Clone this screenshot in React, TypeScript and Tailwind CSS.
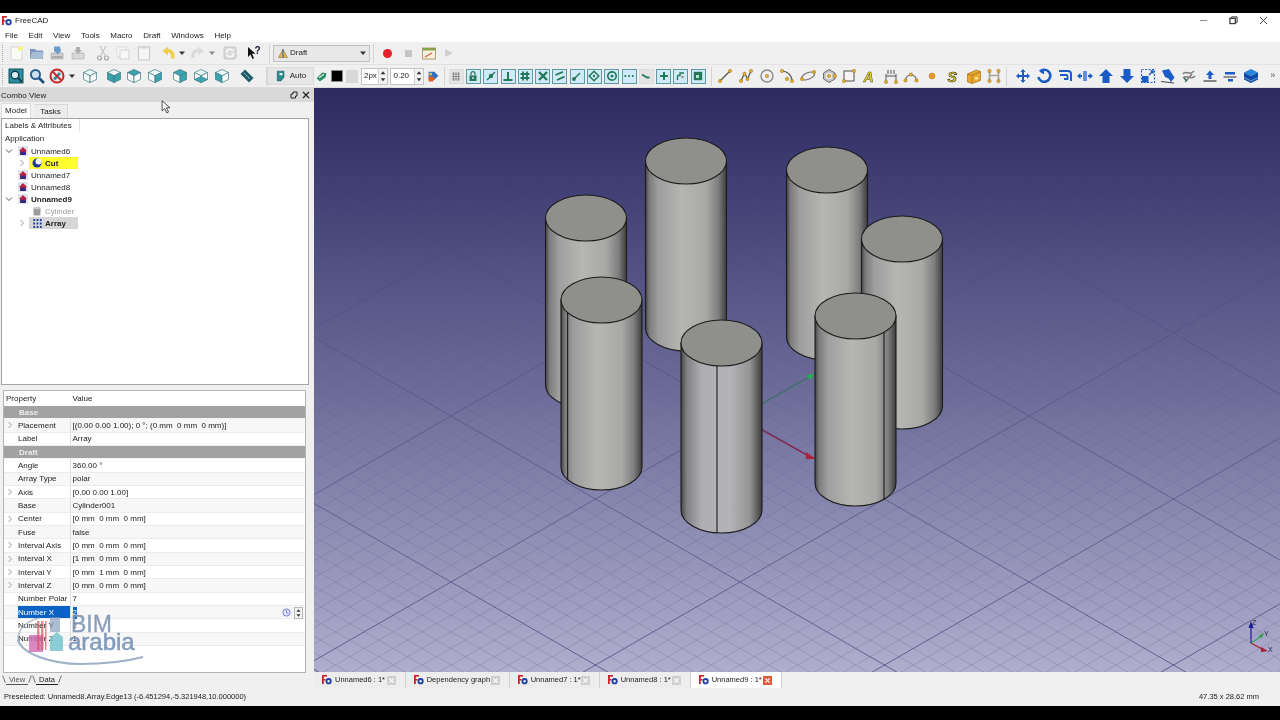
import type { ReactNode } from "react";

const font = "font-['Liberation_Sans',Arial,sans-serif]";

function I({ children, className = "w-4 h-4" }: { children: ReactNode; className?: string }) {
  return (
    <svg viewBox="0 0 16 16" className={className}>
      {children}
    </svg>
  );
}

function Slot({ className = "w-[20.7px]", children }: { className?: string; children?: ReactNode }) {
  return <div className={`flex shrink-0 items-center justify-center ${className}`}>{children}</div>;
}

function Grip() {
  return <div className="h-[17px] w-[2px] shrink-0 border-l border-dotted border-[#a8a8a8]" />;
}

function Sep({ className = "" }: { className?: string }) {
  return <div className={`h-[19px] w-px shrink-0 bg-[#d4d4d4] ${className}`} />;
}

function FcLogo({ className = "w-[10px] h-[10px]" }: { className?: string }) {
  return (
    <svg viewBox="0 0 10 10" className={className}>
      <rect x="0" y="0" width="5" height="1.6" fill="#d0202a" />
      <rect x="0" y="0" width="1.8" height="9" fill="#d0202a" />
      <rect x="0" y="4" width="3.5" height="1.5" fill="#d0202a" />
      <circle cx="6.6" cy="6.2" r="2.2" fill="none" stroke="#1c3fa8" strokeWidth="1.8" />
    </svg>
  );
}

function Dropdown() {
  return (
    <svg viewBox="0 0 8 8" className="h-2 w-2">
      <path d="M1 2.5h6L4 6z" fill="#333" />
    </svg>
  );
}

function Cube({ face }: { face?: "t" | "l" | "r" | "lr" | "b" | "tr" }) {
  const on = "#3ba3ae";
  const soft = "#eef7f8";
  return (
    <I>
      <path d="M8 1.5 14.5 4.5 8 7.8 1.5 4.5z" fill={face === "t" || face === "tr" ? on : soft} stroke="#3b7782" strokeWidth=".7" />
      <path d="M1.5 4.5 8 7.8V14.6L1.5 11.4z" fill={face === "l" || face === "lr" ? on : "#f8fbfb"} stroke="#3b7782" strokeWidth=".7" />
      <path d="M14.5 4.5 8 7.8V14.6l6.5-3.2z" fill={face === "r" || face === "lr" || face === "tr" ? on : "#f8fbfb"} stroke="#3b7782" strokeWidth=".7" />
      {face === "b" && <path d="M1.5 11.4 8 8.4l6.5 3L8 14.6z" fill={on} stroke="#3b7782" strokeWidth=".6" />}
    </I>
  );
}

const g = "#26785a";

const snapIcons: ReactNode[] = [
  <>
    <path d="M2 4h8M2 6.5h8M2 9h8M3.5 2v9M6 2v9M8.5 2v9" stroke="#8a8a8a" strokeWidth=".9" />
  </>,
  <>
    <rect x="2.5" y="5.5" width="7" height="5.5" fill={g} />
    <path d="M4 5.5V3.6a2 2 0 0 1 4 0v1.9" fill="none" stroke={g} strokeWidth="1.2" />
    <rect x="5.3" y="7" width="1.4" height="2" fill="#c9e8f5" />
  </>,
  <>
    <path d="M2 10 10 2" stroke={g} strokeWidth="1.5" />
    <circle cx="6" cy="6" r="2.2" fill={g} />
  </>,
  <path d="M6 2v8M1.5 10h9" stroke={g} strokeWidth="2" />,
  <path d="M4 1.5v9M8 1.5v9M1.5 4h9M1.5 8h9" stroke={g} strokeWidth="1.8" />,
  <path d="M2 2l8 8M10 2l-8 8" stroke={g} strokeWidth="2.4" />,
  <path d="M1.5 5 9 1.8M3 10l7.5-3.4" stroke={g} strokeWidth="1.8" />,
  <>
    <path d="M2 10 9 3" stroke={g} strokeWidth="1.4" />
    <circle cx="3" cy="9" r="1.9" fill={g} />
  </>,
  <>
    <path d="M6 1.2 10.8 6 6 10.8 1.2 6z" fill="none" stroke={g} strokeWidth="1.5" />
    <circle cx="6" cy="6" r="1.2" fill={g} />
  </>,
  <>
    <circle cx="6" cy="6" r="4.2" fill="none" stroke={g} strokeWidth="1.7" />
    <circle cx="6" cy="6" r="1.5" fill={g} />
  </>,
  <path d="M1.5 6h1.6M5.2 6h1.6M8.9 6h1.6" stroke={g} strokeWidth="2" />,
  <path d="M2 4.5 7 7.5M6.5 7.5h3" stroke={g} strokeWidth="2" />,
  <path d="M6 2v8M2 6h8" stroke={g} strokeWidth="2" />,
  <>
    <path d="M2.5 10V5.5M2.5 5.5h2.5V3H9" fill="none" stroke={g} strokeWidth="1.4" />
    <circle cx="7.5" cy="7" r="1.2" fill="#888" />
  </>,
  <>
    <rect x="1.8" y="1.8" width="8.4" height="8.4" fill={g} />
    <rect x="4" y="5" width="3" height="3" fill="#b9e4c8" />
  </>,
];

function Dot({ x, y }: { x: number; y: number }) {
  return <circle cx={x} cy={y} r="1.7" fill="#e2a92c" stroke="#8a6a14" strokeWidth=".4" />;
}

const wireIcons: ReactNode[] = [
  <I key="line">
    <path d="M3 13 13 3" stroke="#505050" strokeWidth="1.3" />
    <Dot x={3} y={13} />
    <Dot x={13} y={3} />
  </I>,
  <I key="wire">
    <path d="M3 13 6.5 5 9.5 11 13 3" stroke="#505050" strokeWidth="1.2" fill="none" />
    <Dot x={3} y={13} />
    <Dot x={6.5} y={6} />
    <Dot x={9.5} y={11} />
    <Dot x={13} y={3} />
  </I>,
  <I key="circle">
    <circle cx="8" cy="8" r="6" fill="#eee" stroke="#8a8a8a" strokeWidth="1.4" />
    <Dot x={8} y={8} />
  </I>,
  <I key="arc">
    <path d="M3 3c5 0 10 4 10 10" stroke="#606060" strokeWidth="1.2" fill="none" />
    <Dot x={3} y={3} />
    <Dot x={8} y={11} />
    <Dot x={13} y={13} />
  </I>,
  <I key="ellipse">
    <ellipse cx="8" cy="8" rx="7" ry="3.2" transform="rotate(-22 8 8)" fill="none" stroke="#707070" strokeWidth="1.1" />
    <Dot x={14} y={4} />
    <Dot x={2} y={11} />
  </I>,
  <I key="polygon">
    <path d="M8 1.5 14 5v6L8 14.5 2.5 11V5z" fill="#c4c4c4" stroke="#6f6f6f" />
    <circle cx="8" cy="8" r="3.2" fill="#f0f0f0" />
    <Dot x={8} y={8} />
    <Dot x={14} y={8} />
  </I>,
  <I key="rect">
    <rect x="3" y="3" width="10" height="10" fill="#f4f4f4" stroke="#505050" strokeWidth="1" />
    <Dot x={3} y={13} />
    <Dot x={13} y={3} />
  </I>,
  <I key="text">
    <text x="1.5" y="13.5" fontSize="14" fontWeight="700" fontStyle="italic" fontFamily="'Liberation Sans',sans-serif" fill="#e7d22c" stroke="#4d4a20" strokeWidth=".5">
      A
    </text>
  </I>,
  <I key="dim">
    <path d="M3 14V6M13 14V6M3 8h10" stroke="#555" strokeWidth="1" />
    <path d="M5 2v4M8 2v4M11 2v4" stroke="#6a6a6a" strokeWidth="1.2" />
    <Dot x={3} y={14} />
    <Dot x={13} y={14} />
  </I>,
  <I key="bspline">
    <path d="M2.5 13C3 5 13 5 13.5 13" stroke="#555" strokeWidth="1.2" fill="none" />
    <Dot x={2.5} y={12.5} />
    <Dot x={8} y={6.5} />
    <Dot x={13.5} y={12.5} />
  </I>,
  <I key="point">
    <circle cx="8" cy="8" r="3" fill="#e49a2a" stroke="#b9761a" strokeWidth=".5" />
  </I>,
  <I key="shape">
    <text x="2.5" y="13.5" fontSize="14" fontWeight="700" fontStyle="italic" fontFamily="'Liberation Sans',sans-serif" fill="#e9d52a" stroke="#2b2b16" strokeWidth=".6">
      S
    </text>
  </I>,
  <I key="face">
    <path d="M1.5 6 10 2l4.5 1.5v9L6 15.5 1.5 14z" fill="#eaa82c" stroke="#95641a" strokeWidth=".6" />
    <path d="M6 7.5 14.5 3.5M6 7.5V15.5M1.5 6 6 7.5" stroke="#9b6a1d" strokeWidth=".7" fill="none" />
    <path d="M9 9h3v2.5H9z" fill="#f8e3a0" />
  </I>,
  <I key="bubble">
    <path d="M3.5 3v10M12.5 3v10M3.5 7.5h9" stroke="#a7a296" strokeWidth="1.6" />
    <Dot x={3.5} y={3} />
    <Dot x={12.5} y={3} />
    <Dot x={3.5} y={13} />
    <Dot x={12.5} y={13} />
  </I>,
];

const b = "#1b5cc6";

const modIcons: ReactNode[] = [
  <I key="move">
    <path d="M8 1 10.6 4H9v3h3V5.3L15 8l-3 2.7V9H9v3h1.6L8 15l-2.6-3H7V9H4v1.7L1 8l3-2.7V7h3V4H5.4z" fill={b} />
  </I>,
  <I key="rotate">
    <path d="M4 3.5A6 6 0 1 1 2.4 9" fill="none" stroke={b} strokeWidth="2.6" />
    <path d="M8 .5v6L3.5 3.5z" fill={b} />
  </I>,
  <I key="offset">
    <path d="M2 3h9a3 3 0 0 1 3 3v7" fill="none" stroke={b} strokeWidth="2" />
    <path d="M3 7h6.5a1 1 0 0 1 1 1v3H7" fill="none" stroke={b} strokeWidth="1.8" />
  </I>,
  <I key="trim">
    <path d="M0 8l3.5-3v2h1.5v2H3.5v2zM16 8l-3.5-3v2H11v2h1.5v2z" fill={b} />
    <path d="M7 3v10M9 3v10" stroke={b} strokeWidth="1.3" />
  </I>,
  <I key="up">
    <path d="M8 1 15 8h-3.5v7h-7V8H1z" fill={b} />
  </I>,
  <I key="down">
    <path d="M8 15 1 8h3.5V1h7v7H15z" fill={b} />
  </I>,
  <I key="scale">
    <rect x="1.5" y="1.5" width="13" height="13" fill="none" stroke={b} strokeWidth="1.2" strokeDasharray="2 1.5" />
    <rect x="2" y="8" width="6.5" height="6.5" fill={b} />
    <path d="M9 7l4-4M10.5 3H13v2.5" stroke={b} strokeWidth="1.4" fill="none" />
  </I>,
  <I key="sketch">
    <path d="M2 2.5 9 1l5.500 8.500L11 14 8.500 10.500 5 9z" fill={b} />
    <path d="M1 13.5 14 15" stroke="#444" strokeWidth="1.2" />
  </I>,
  <I key="shapestr">
    <path d="M2 6c3-5 6 3 11-3M2 10c4-4 8 3 12-2M4 14l7-8" fill="none" stroke="#7d7d7d" strokeWidth="1.5" />
    <path d="M3 10l3 3" stroke="#1f6f4a" strokeWidth="1.4" />
  </I>,
  <I key="upgrade">
    <path d="M8 2.5 12 7H9.5v4h-3V7H4z" fill={b} />
    <path d="M1.5 13h13" stroke="#555" strokeWidth="1.4" />
  </I>,
  <I key="downgrade">
    <rect x="3" y="4" width="10" height="2.5" fill={b} />
    <path d="M1.500 9h13" stroke="#666" strokeWidth="1.4" />
    <rect x="6" y="11" width="5" height="2.5" fill={b} />
  </I>,
  <I key="wireclone">
    <path d="M8 1 15 4.5 8 8 1 4.5z" fill="#2a86dc" />
    <path d="M1 4.5 8 8v7l-7-3.500zM15 4.5 8 8v7l7-3.500z" fill="#0d4ba8" />
    <path d="M1 9.5 8 13l7-3.5" stroke="#9bb0c8" strokeWidth=".8" fill="none" />
  </I>,
];

function Toggle({ i }: { i: number }) {
  const off = i === 0 || i === 11;
  return (
    <Slot className="w-[17.3px]">
      <div className={`flex h-[15px] w-[15px] items-center justify-center border ${off ? "border-[#dcdcdc] bg-[#e4e4e4]" : "border-[#5d9aa6] bg-[#d0ebf7]"}`}>
        <svg viewBox="0 0 12 12" className="h-[12px] w-[12px]">
          {snapIcons[i]}
        </svg>
      </div>
    </Slot>
  );
}

function Spin({ value, className }: { value: string; className: string }) {
  return (
    <div className={`flex h-[17px] shrink-0 items-center border border-[#c4c4c4] bg-white text-[8px] text-[#222] ${className}`}>
      <span className="flex-1 pl-[2px]">{value}</span>
      <span className="flex h-full w-[9px] flex-col border-l border-[#d5d5d5] bg-[#f2f2f2]">
        <svg viewBox="0 0 8 8" className="h-1/2 w-full">
          <path d="M1.5 5.5 4 2.5l2.5 3z" fill="#333" />
        </svg>
        <svg viewBox="0 0 8 8" className="h-1/2 w-full">
          <path d="M1.5 2.5h5L4 5.5z" fill="#333" />
        </svg>
      </span>
    </div>
  );
}

function ToolbarOne() {
  return (
    <div className="flex h-[23px] items-center border-b border-[#e2e2e2] bg-[#f0f0f0]">
      <div className="flex w-[5.6px] justify-center"><Grip /></div>
      <Slot>
        <I>
          <path d="M3 2h8l3 3v10H3z" fill="#fbfbf6" stroke="#cfcfcf" strokeWidth=".8" />
          <circle cx="12.5" cy="3.5" r="2.6" fill="#f8f28a" />
        </I>
      </Slot>
      <Slot>
        <I>
          <path d="M1 4h5l1.5 1.5H14V14H1z" fill="#7d98b8" />
          <path d="M3 7h12l-2 7H1z" fill="#a7bdd4" />
        </I>
      </Slot>
      <Slot>
        <I>
          <path d="M2 8h12v6H2z" fill="#cfcfcf" stroke="#a0a0a0" strokeWidth=".6" />
          <path d="M5 1.5h6l1 4.500-3 3.500L5 6z" fill="#6a9cc8" />
          <path d="M3 12h10" stroke="#888" />
        </I>
      </Slot>
      <Slot>
        <I>
          <path d="M2 8h12v6H2z" fill="#d8d8d8" stroke="#aaa" strokeWidth=".6" />
          <path d="M6 2h4v3h2L8 9 4 5h2z" fill="#aeaeae" />
        </I>
      </Slot>
      <Slot className="ml-[4px] w-[20.7px]">
        <I>
          <path d="M11 1 5.5 11M5 1l5.5 10" stroke="#cacaca" strokeWidth="1.3" />
          <circle cx="4.5" cy="13" r="2" fill="none" stroke="#a8a8a8" strokeWidth="1.2" />
          <circle cx="11.5" cy="13" r="2" fill="none" stroke="#a8a8a8" strokeWidth="1.2" />
        </I>
      </Slot>
      <Slot>
        <I>
          <rect x="2" y="2" width="9" height="10" fill="#f7f7f7" stroke="#dcdcdc" />
          <rect x="5" y="5" width="9" height="9" fill="#f7f7f7" stroke="#d2d2d2" />
        </I>
      </Slot>
      <Slot>
        <I>
          <rect x="2.5" y="2" width="11" height="13" fill="#f5f5f5" stroke="#c8c8c8" />
          <rect x="5.5" y="1" width="5" height="2.5" fill="#d2d2d2" />
        </I>
      </Slot>
      <Slot className="ml-[5.6px] w-4">
        <I>
          <path d="M12.5 13.5c1.5-6-3-9-6.500-7.500" fill="none" stroke="#f2cc4a" strokeWidth="3.4" />
          <path d="M8 1.5v9L2.500 6z" fill="#f2cc4a" />
        </I>
      </Slot>
      <Slot className="ml-[1px] w-[10px]"><Dropdown /></Slot>
      <Slot className="ml-[3px] w-4">
        <I>
          <path d="M3 13C2 7 6 4 10 6" fill="none" stroke="#dadada" strokeWidth="3.2" />
          <path d="M8 1.5v9L14 6z" fill="#dcdcdc" />
        </I>
      </Slot>
      <Slot className="ml-[1px] w-[10px]">
        <svg viewBox="0 0 8 8" className="h-2 w-2"><path d="M1 2.5h6L4 6z" fill="#888" /></svg>
      </Slot>
      <Slot className="ml-[3px] w-5">
        <I>
          <rect x="2" y="2" width="12" height="12" rx="2" fill="#dcdcdc" stroke="#c4c4c4" />
          <path d="M4.5 8a3.500 3.500 0 0 1 6.500-2M11.5 8A3.500 3.500 0 0 1 5 10" stroke="#f8f8f8" strokeWidth="1.5" fill="none" />
        </I>
      </Slot>
      <Slot className="ml-[4px] w-5">
        <I>
          <path d="M2 2v10l2.500-2.500L6.500 14l1.600-.8L6 8.800h3.400z" fill="#111" />
          <text x="8.5" y="9" fontSize="10" fontWeight="700" fill="#111a30" fontFamily="'Liberation Sans',sans-serif">?</text>
        </I>
      </Slot>
      <Sep className="ml-[5px]" />
      <div className="ml-[3px] flex h-[17px] w-[97px] shrink-0 items-center border border-[#c2c2c2] bg-[#e8e8e8] pl-[3px] text-[8px] text-[#222]">
        <I className="h-3 w-3">
          <path d="M2 14 8 3l6 11z" fill="#e0b84a" stroke="#8a6a20" strokeWidth=".7" />
          <path d="M8 3v11" stroke="#2b5fb0" strokeWidth="1.4" />
        </I>
        <span className="ml-[1px] flex-1">Draft</span>
        <span className="mr-[2px]"><Dropdown /></span>
      </div>
      <Sep className="ml-[3px]" />
      <Slot className="ml-[3px] w-5">
        <div className="h-[9px] w-[9px] rounded-full bg-[#e4212c]" />
      </Slot>
      <Slot className="ml-[1px] w-5">
        <div className="h-[7px] w-[7px] bg-[#c4c4c4]" />
      </Slot>
      <Slot className="ml-[1px] w-5">
        <I>
          <rect x="1.5" y="3" width="13" height="11" fill="#f6f0dc" stroke="#b0a070" />
          <rect x="1.5" y="3" width="13" height="2.5" fill="#8aa14c" />
          <path d="M4 12 11 8" stroke="#d0694a" strokeWidth="1.4" />
        </I>
      </Slot>
      <Slot className="w-5">
        <svg viewBox="0 0 10 10" className="h-[10px] w-[10px]"><path d="M1 1 9 5 1 9z" fill="#cfcfcf" /></svg>
      </Slot>
    </div>
  );
}

function ToolbarTwo() {
  return (
    <div className="flex h-[23px] items-center border-b border-[#dcdcdc] bg-[#f0f0f0]">
      <div className="flex w-[5.6px] justify-center"><Grip /></div>
      <Slot>
        <I>
          <rect x="1" y="1" width="14" height="14" fill="#2a8fa0" stroke="#14535f" />
          <circle cx="7" cy="7" r="3.8" fill="#d9edf2" stroke="#10414c" strokeWidth="1.4" />
          <path d="M10 10l4 4" stroke="#10414c" strokeWidth="2" />
        </I>
      </Slot>
      <Slot>
        <I>
          <circle cx="6.5" cy="6.5" r="4.5" fill="#cfe0ee" stroke="#2a5f92" strokeWidth="2" />
          <path d="M10 10l5 5" stroke="#1f4f7c" strokeWidth="2.6" />
        </I>
      </Slot>
      <Slot>
        <I>
          <circle cx="8" cy="8" r="6.500" fill="#e9e9e9" stroke="#c62a28" strokeWidth="2" />
          <path d="M4 10.500 10 4l2 2-6 6.500z" fill="#2a8fa0" />
          <path d="M3.5 3.5l9 9" stroke="#c62a28" strokeWidth="1.8" />
        </I>
      </Slot>
      <Slot className="w-2"><Dropdown /></Slot>
      <Slot className="ml-[4px] w-5"><Cube /></Slot>
      <Slot className="ml-[3.6px] w-[20.7px]"><Cube face="lr" /></Slot>
      <Slot><Cube face="t" /></Slot>
      <Slot><Cube face="r" /></Slot>
      <Slot className="ml-[4.6px] w-[20.7px]"><Cube face="tr" /></Slot>
      <Slot><Cube face="b" /></Slot>
      <Slot><Cube face="l" /></Slot>
      <Slot className="ml-[5px] w-5">
        <I>
          <path d="M1.5 6 6 1.5 14.5 10 10 14.500z" fill="#1f5c68" />
          <path d="M5 5l1.500 1.500M7 7l1.500 1.500M9 9l1.500 1.500" stroke="#bfe2e6" strokeWidth=".9" />
        </I>
      </Slot>
      <Sep className="ml-[9px]" />
      <div className="flex h-[18px] w-[47px] shrink-0 items-center justify-center gap-[3px] border border-[#dadada] bg-[#e6e6e6] text-[8px] text-[#222]">
        <I className="h-3 w-3">
          <path d="M3 1.500h9v8l-4 5H3z" fill="#2a8a90" stroke="#13515a" strokeWidth=".7" />
          <path d="M6 4h4v3H6z" fill="#e2f0f0" />
        </I>
        Auto
      </div>
      <Slot className="w-4">
        <I className="h-[13px] w-[13px]">
          <path d="M2 10 9 3l5 1-1 5-7 5z" fill="#2c8d62" />
          <path d="M5 9.500 11 5" stroke="#f2f2f2" strokeWidth="1.3" />
        </I>
      </Slot>
      <div className="ml-[1px] h-[12px] w-[12px] shrink-0 border border-[#8a8a8a] bg-black" />
      <div className="ml-[3px] h-[13px] w-[12px] shrink-0 bg-[#d8d8d8]" />
      <Spin value="2px" className="ml-[3px] w-[27px]" />
      <Spin value="0.20" className="ml-[2.5px] w-[34px]" />
      <Slot className="ml-[1px] w-[16px]">
        <I className="h-[13px] w-[13px]">
          <path d="M2 2h7l5 5-5 5H2z" fill="#2f6fc0" />
          <path d="M2 8h5l3 3-3 3H2z" fill="#d8632a" />
          <rect x="3" y="3.500" width="3" height="3" fill="#f0c83c" />
        </I>
      </Slot>
      <Sep className="ml-[3px]" />
      <div className="ml-[2px] flex">
        {snapIcons.map((_, i) => (
          <Toggle key={i} i={i} />
        ))}
      </div>
      <Sep className="ml-[4px]" />
      <div className="ml-[3px] flex">
        {wireIcons.map((ic, i) => (
          <Slot key={i}>{ic}</Slot>
        ))}
      </div>
      <Sep className="ml-[1px]" />
      <div className="ml-[6.5px] flex">
        {modIcons.map((ic, i) => (
          <Slot key={i}>{ic}</Slot>
        ))}
      </div>
      <span className="ml-[9px] text-[9px] text-[#555]">»</span>
    </div>
  );
}

function DocIcon() {
  return (
    <svg viewBox="0 0 10 10" className="h-[10px] w-[10px]">
      <rect x="0" y="0" width="10" height="10" fill="#dfe3ee" />
      <path d="M5 1 9 5H8v4H2V5H1z" fill="#c0203c" />
      <rect x="2.5" y="5.5" width="5" height="3.5" fill="#25308e" />
    </svg>
  );
}

function Chevron({ open }: { open?: boolean }) {
  return (
    <svg viewBox="0 0 8 8" className="h-2 w-2">
      <path d={open ? "M1 2.5 4 5.5 7 2.5" : "M2.5 1 5.5 4 2.5 7"} fill="none" stroke={open ? "#555" : "#9a9a9a"} strokeWidth="1" />
    </svg>
  );
}

function TreeDoc({ label, open, bold }: { label: string; open?: boolean; bold?: boolean }) {
  return (
    <div className="flex h-3 items-center">
      <span className="flex w-[13px] justify-center">{open && <Chevron open />}</span>
      <span className="flex w-[16px] justify-center"><DocIcon /></span>
      <span className={`pt-[1px] ${bold ? "font-bold" : ""}`}>{label}</span>
    </div>
  );
}

function TreeObj({ label, icon, bg, arrow, muted }: { label: string; icon: ReactNode; bg?: string; arrow?: boolean; muted?: boolean }) {
  return (
    <div className="flex h-3 items-center pl-[13px]">
      <span className="flex w-[14px] justify-center">{arrow && <Chevron />}</span>
      <span className={`flex h-3 w-[49px] items-center ${bg ?? ""}`}>
        <span className="flex w-[16px] justify-center">{icon}</span>
        <span className={`pt-[1px] ${muted ? "text-[#9a9a9a]" : "font-bold"}`}>{label}</span>
      </span>
    </div>
  );
}

function TreePanel() {
  return (
    <div className="ml-[1px] h-[267px] w-[308px] shrink-0 border border-[#a4a4a4] bg-white text-[8px] text-[#222]">
      <div className="flex h-[13px] w-[78px] items-center border-r border-[#e2e2e2] pl-[3px] pt-[1px]">Labels &amp; Attributes</div>
      <div className="flex h-[13px] items-center pl-[3px] pt-[1px]">Application</div>
      <TreeDoc label="Unnamed6" open />
      <TreeObj
        label="Cut"
        arrow
        bg="bg-[#ffff30]"
        icon={
          <svg viewBox="0 0 10 10" className="h-[10px] w-[10px]">
            <circle cx="5" cy="5" r="4.5" fill="#1c3a9a" />
            <circle cx="6.5" cy="3.5" r="3" fill="#f4f4f4" />
          </svg>
        }
      />
      <TreeDoc label="Unnamed7" />
      <TreeDoc label="Unnamed8" />
      <TreeDoc label="Unnamed9" open bold />
      <TreeObj
        label="Cylinder"
        muted
        icon={
          <svg viewBox="0 0 10 10" className="h-[10px] w-[10px]">
            <rect x="1.5" y="1" width="7" height="8.5" rx="1.5" fill="#9b9b9b" />
            <ellipse cx="5" cy="2" rx="3.5" ry="1.3" fill="#c9c9c9" />
          </svg>
        }
      />
      <TreeObj
        label="Array"
        arrow
        bg="bg-[#d6d6d6]"
        icon={
          <svg viewBox="0 0 9 9" className="h-[9px] w-[9px]">
            <path d="M1.2 0v2M1.2 3.5v2M1.2 7v2M4.5 0v2M4.5 3.5v2M4.5 7v2M7.8 0v2M7.8 3.5v2M7.8 7v2" stroke="#1c3f9a" strokeWidth="1.8" />
          </svg>
        }
      />
    </div>
  );
}

type PropRow = { name: string; value?: string; arrow?: boolean; section?: boolean; selected?: boolean };

const rows: PropRow[] = [
  { name: "Base", section: true },
  { name: "Placement", value: "[(0.00 0.00 1.00); 0 °; (0 mm  0 mm  0 mm)]", arrow: true },
  { name: "Label", value: "Array" },
  { name: "Draft", section: true },
  { name: "Angle", value: "360.00 °" },
  { name: "Array Type", value: "polar" },
  { name: "Axis", value: "[0.00 0.00 1.00]", arrow: true },
  { name: "Base", value: "Cylinder001" },
  { name: "Center", value: "[0 mm  0 mm  0 mm]", arrow: true },
  { name: "Fuse", value: "false" },
  { name: "Interval Axis", value: "[0 mm  0 mm  0 mm]", arrow: true },
  { name: "Interval X", value: "[1 mm  0 mm  0 mm]", arrow: true },
  { name: "Interval Y", value: "[0 mm  1 mm  0 mm]", arrow: true },
  { name: "Interval Z", value: "[0 mm  0 mm  0 mm]", arrow: true },
  { name: "Number Polar", value: "7" },
  { name: "Number X", value: "2", selected: true },
  { name: "Number Y", value: "2" },
  { name: "Number Z", value: "1" },
];

function PropertyRow({ row, alt }: { row: PropRow; alt: boolean }) {
  if (row.section) {
    return (
      <div className="flex h-[13.33px] items-center border-b border-[#f4f4f4] bg-[#a2a2a2] pl-[15px] pt-[1px] font-bold text-[#ececec]">
        {row.name}
      </div>
    );
  }
  return (
    <div className={`flex h-[13.33px] items-center border-b border-[#ececec] ${alt ? "bg-[#f7f7f7]" : "bg-white"}`}>
      <div className="flex w-[14px] shrink-0 pl-[2px]">{row.arrow && <Chevron />}</div>
      <div className={`flex h-full w-[52.5px] shrink-0 items-center whitespace-nowrap border-r border-[#dedede] pt-[1px] ${row.selected ? "bg-[#0a62c4] text-white" : ""}`}>
        {row.name}
      </div>
      <div className="flex flex-1 items-center pl-[2px] pt-[1px]">
        {row.selected ? (
          <>
            <span className="bg-[#0a62c4] text-white">{row.value}</span>
            <span className="flex-1" />
            <svg viewBox="0 0 10 10" className="h-[9px] w-[9px]">
              <circle cx="5" cy="5" r="4" fill="#e3e5f8" stroke="#6a72d4" />
              <path d="M5 2.5V5l2 1" stroke="#4b55c4" fill="none" strokeWidth=".8" />
            </svg>
            <span className="ml-[3px] mr-[2px] flex h-[12px] w-[9px] flex-col border border-[#b9b9b9] bg-[#f1f1f1]">
              <svg viewBox="0 0 8 6" className="h-1/2 w-full"><path d="M1.5 4.5 4 1.5l2.5 3z" fill="#333" /></svg>
              <svg viewBox="0 0 8 6" className="h-1/2 w-full"><path d="M1.5 1.5h5L4 4.5z" fill="#333" /></svg>
            </span>
          </>
        ) : (
          <span className="whitespace-pre">{row.value}</span>
        )}
      </div>
    </div>
  );
}

function Watermark() {
  return (
    <svg viewBox="15 612 135 56" className="pointer-events-none absolute left-[11px] top-[221px] h-[56px] w-[135px]">
      <path d="M18 640c0-12 10-20 22-22" fill="none" stroke="#8ea3bd" strokeWidth="1.5" opacity=".7" />
      <path d="M18 640c4 14 34 24 62 24 26 0 44-2 63-7" fill="none" stroke="#8ea3bd" strokeWidth="2.2" opacity=".85" />
      <rect x="29" y="635" width="14" height="17" fill="#d26bb6" opacity=".8" />
      <path d="M37 621h2.5v29H37zM41 621h2.5v29H41zM45 621h1.5v29H45z" fill="#d9505c" opacity=".65" />
      <rect x="50" y="617" width="10" height="15" fill="#7f9ab8" opacity=".65" />
      <path d="M50 638l7-6 6 5v14H50z" fill="#79c6cf" opacity=".85" />
      <text x="71" y="632" fontSize="23" fontFamily="'Liberation Sans',sans-serif" fill="#7e94b4" stroke="#7e94b4" strokeWidth=".3" opacity=".9">BIM</text>
      <text x="68" y="650" fontSize="24" fontFamily="'Liberation Sans',sans-serif" fill="#7b96bb" stroke="#7b96bb" strokeWidth=".5" opacity=".95">arabia</text>
    </svg>
  );
}

function PropertyPanel() {
  return (
    <div className="relative ml-[3px] h-[283px] w-[303px] shrink-0 border border-[#b4b4b4] bg-white text-[8px] text-[#222]">
      <div className="flex h-[15px] items-center bg-white">
        <div className="flex h-full w-[66.5px] items-center pl-[2px]">Property</div>
        <div className="pl-[2px]">Value</div>
      </div>
      {rows.map((r, i) => (
        <PropertyRow key={i} row={r} alt={i % 2 === 1} />
      ))}
      <Watermark />
    </div>
  );
}

function ComboPanel() {
  return (
    <div className="flex w-[314px] shrink-0 flex-col bg-[#f0f0f0] text-[8px] text-[#222]">
      <div className="flex h-[14px] shrink-0 items-center justify-between bg-[#d9d9d9] pl-[1px] pr-[4px]">
        <span className="pt-[1px]">Combo View</span>
        <span className="flex items-center gap-[4px]">
          <svg viewBox="0 0 8 8" className="h-2 w-2">
            <path d="M3 1h4v4H5.5V7H1V3h2z" fill="none" stroke="#222" strokeWidth="1" />
          </svg>
          <svg viewBox="0 0 8 8" className="h-2 w-2">
            <path d="M1 1l6 6M7 1 1 7" stroke="#222" strokeWidth="1.2" />
          </svg>
        </span>
      </div>
      <div className="flex h-[16px] shrink-0 items-end pl-[1px]">
        <div className="flex h-[15px] w-[30px] items-center justify-center border border-b-0 border-[#dcdcdc] bg-white pb-[1px]">Model</div>
        <div className="ml-[3px] flex h-[14px] w-[34px] items-center justify-center border-r border-t border-[#d8d8d8] bg-[#ececec]">Tasks</div>
      </div>
      <TreePanel />
      <div className="h-[5px] shrink-0" />
      <PropertyPanel />
      <div className="flex h-[14px] shrink-0 items-start pl-[2px] pt-[1px] text-[7.5px]">
        <svg viewBox="0 0 6 12" className="h-[11px] w-[4px]"><path d="M1 0 5 11" stroke="#333" fill="none" /></svg>
        <span className="flex h-[11px] w-[22px] items-center justify-center border-b border-[#555] pt-[1px] text-[#555]">View</span>
        <svg viewBox="0 0 6 12" className="h-[11px] w-[4px]"><path d="M5 0 1 11" stroke="#333" fill="none" /></svg>
        <svg viewBox="0 0 6 12" className="h-[11px] w-[4px]"><path d="M1 0 5 11" stroke="#333" fill="none" /></svg>
        <span className="flex h-[11px] w-[22px] items-center justify-center border-b border-[#222] pt-[1px] text-[#222]">Data</span>
        <svg viewBox="0 0 6 12" className="h-[11px] w-[4px]"><path d="M5 0 1 11" stroke="#333" fill="none" /></svg>
      </div>
    </div>
  );
}

function Cylinder({ cx, cy, edge, gradient = "url(#cyl)" }: { cx: number; cy: number; edge?: number; gradient?: string }) {
  const rx = 40.5;
  const ry = 23;
  const h = 167;
  const edgeTop = edge === undefined ? 0 : cy + ry * Math.sqrt(1 - ((edge - cx) / rx) ** 2);
  return (
    <g stroke="#1b1b1b" strokeWidth="1.1">
      <path
        d={`M${cx - rx} ${cy}V${cy + h}A${rx} ${ry} 0 0 0 ${cx + rx} ${cy + h}V${cy}Z`}
        fill={gradient}
      />
      <ellipse cx={cx} cy={cy} rx={rx} ry={ry} fill="#8f8f8c" />
      {edge !== undefined && <path d={`M${edge} ${edgeTop}V${edgeTop + h}`} fill="none" strokeWidth="1" stroke="#0c0c0c" />}
    </g>
  );
}

function GridLines() {
  // lattice comes from the crossings of the heavy lines: origin 740,416 and one cell 144.5,83
  const ox = 740;
  const oy = 416;
  const ux = 144.5;
  const uy = 83;
  const lines: ReactNode[] = [];
  for (let i = -90; i <= 90; i++) {
    const major = i % 10 === 0;
    const stroke = major ? "#37336f" : "#4d4983";
    const width = major ? 0.9 : 0.55;
    const opacity = major ? 0.72 : 0.4;
    const d = (i / 10) * ux;
    const e = (i / 10) * uy;
    lines.push(
      <line key={`a${i}`} x1={ox + d - ux * 9} y1={oy + e + uy * 9} x2={ox + d + ux * 9} y2={oy + e - uy * 9} stroke={stroke} strokeWidth={width} opacity={opacity} />,
      <line key={`b${i}`} x1={ox + d - ux * 9} y1={oy - e - uy * 9} x2={ox + d + ux * 9} y2={oy - e + uy * 9} stroke={stroke} strokeWidth={width} opacity={opacity} />,
    );
  }
  return <g mask="url(#gridFade)">{lines}</g>;
}

function Scene() {
  return (
    <svg viewBox="314 88 966 584" className="block h-full w-full">
      <defs>
        <linearGradient id="cyl" x1="0" x2="1" y1="0" y2="0">
          <stop offset="0" stopColor="#454545" />
          <stop offset=".05" stopColor="#7c7c7c" />
          <stop offset=".16" stopColor="#9e9e9e" />
          <stop offset=".45" stopColor="#b6b6b4" />
          <stop offset=".75" stopColor="#a8a8a6" />
          <stop offset=".9" stopColor="#7e7e7e" />
          <stop offset="1" stopColor="#3c3c3c" />
        </linearGradient>
        <linearGradient id="cylFront" x1="0" x2="1" y1="0" y2="0">
          <stop offset="0" stopColor="#454545" />
          <stop offset=".07" stopColor="#808082" />
          <stop offset=".25" stopColor="#aeaeb2" />
          <stop offset=".6" stopColor="#b4b4b8" />
          <stop offset=".85" stopColor="#949494" />
          <stop offset="1" stopColor="#3c3c3c" />
        </linearGradient>
        <linearGradient id="fade" x1="0" x2="0" y1="0" y2="1">
          <stop offset="0.15" stopColor="#000" />
          <stop offset="0.6" stopColor="#999" />
          <stop offset="1" stopColor="#fff" />
        </linearGradient>
        <mask id="gridFade" maskUnits="userSpaceOnUse" x="314" y="88" width="966" height="584">
          <rect x="314" y="88" width="966" height="584" fill="url(#fade)" />
        </mask>
      </defs>
      <GridLines />
      <Cylinder cx={586} cy={218} />
      <Cylinder cx={686} cy={161} />
      <Cylinder cx={827} cy={170} />
      <Cylinder cx={902} cy={239} />
      <path d="M762 404 812 376" stroke="#2f7f5c" strokeWidth="1" />
      <path d="M806 376l8-3-3 7z" fill="#22b04a" />
      <path d="M762 430 812 458" stroke="#8e1c40" strokeWidth="1.2" />
      <path d="M806 452l10 7-10 0z" fill="#b0203c" />
      <Cylinder cx={601.5} cy={300} edge={567.7} />
      <Cylinder cx={721.5} cy={343} edge={717} gradient="url(#cylFront)" />
      <Cylinder cx={855.5} cy={316} edge={884} />
      <g>
        <path d="M1251 643V625" stroke="#1a1a9a" strokeWidth="1.2" />
        <path d="M1248.5 628 1251 621l2.5 7z" fill="#1a1a9a" />
        <path d="M1251 643 1262 636" stroke="#2fa05a" strokeWidth="1.2" />
        <path d="M1258 636l6-3-2 5z" fill="#2fa05a" />
        <path d="M1251 643 1264 650" stroke="#a81c34" strokeWidth="1.2" />
        <path d="M1261 647l7 4-7 1z" fill="#a81c34" />
        <g fontSize="7" fill="#1f1f3f" fontFamily="'Liberation Sans',sans-serif">
          <text x="1252" y="625">Z</text>
          <text x="1264" y="636">Y</text>
          <text x="1268" y="652">X</text>
        </g>
      </g>
    </svg>
  );
}

function MdiTab({ label, className, active }: { label: string; className: string; active?: boolean }) {
  return (
    <div className={`flex h-full shrink-0 items-center border-r border-[#d0d0d0] pl-[8px] ${active ? "bg-white" : "bg-[#ededed]"} ${className}`}>
      <FcLogo />
      <span className="ml-[3px] flex-1 whitespace-nowrap text-[7.5px] text-[#222]">{label}</span>
      <span className={`mr-[9px] flex h-[9px] w-[9px] items-center justify-center ${active ? "bg-[#e0583a]" : "bg-[#cfcfcf]"}`}>
        <svg viewBox="0 0 8 8" className="h-[7px] w-[7px]">
          <path d="M1.5 1.5l5 5M6.5 1.5l-5 5" stroke="#fff" strokeWidth="1.3" />
        </svg>
      </span>
    </div>
  );
}

export default function App() {
  return (
    <div className={`relative flex h-[720px] w-[1280px] flex-col overflow-hidden bg-black blur-[0.35px] ${font}`}>
      <div className="h-[13px] shrink-0 bg-black" />
      <div className="flex h-[15px] shrink-0 items-center bg-white pl-[2px] text-[8px] text-[#222]">
        <FcLogo />
        <span className="ml-[3px] flex-1">FreeCAD</span>
        <div className="flex pr-[2px]">
          <Slot className="w-[30px]">
            <div className="h-px w-[7px] bg-[#888]" />
          </Slot>
          <Slot className="w-[30px]">
            <svg viewBox="0 0 10 10" className="h-[9px] w-[9px]">
              <rect x="1" y="2.5" width="6" height="6" fill="none" stroke="#222" strokeWidth="1.2" />
              <path d="M3 2.5V1h6v6H7" fill="none" stroke="#222" strokeWidth="1" />
            </svg>
          </Slot>
          <Slot className="w-[30px]">
            <svg viewBox="0 0 10 10" className="h-[9px] w-[9px]">
              <path d="M1 1l8 8M9 1 1 9" stroke="#333" strokeWidth="1" />
            </svg>
          </Slot>
        </div>
      </div>
      <div className="flex h-[14px] shrink-0 items-center gap-[10.7px] bg-white pl-[5px] pt-[1px] text-[8px] text-[#222]">
        {["File", "Edit", "View", "Tools", "Macro", "Draft", "Windows", "Help"].map((m) => (
          <span key={m}>{m}</span>
        ))}
      </div>
      <ToolbarOne />
      <ToolbarTwo />
      <div className="flex h-[600px] shrink-0">
        <ComboPanel />
        <div className="flex min-w-0 flex-1 flex-col">
          <div className="h-[584px] shrink-0 bg-gradient-to-b from-[#2e2a62] to-[#b0aecd]">
            <Scene />
          </div>
          <div className="flex h-[16px] shrink-0 bg-[#f0f0f0]">
            <MdiTab label="Unnamed6 : 1*" className="w-[91.7px]" />
            <MdiTab label="Dependency graph" className="w-[104px]" />
            <MdiTab label="Unnamed7 : 1*" className="w-[90px]" />
            <MdiTab label="Unnamed8 : 1*" className="w-[91px]" />
            <MdiTab label="Unnamed9 : 1*" className="w-[91px]" active />
          </div>
        </div>
      </div>
      <div className="flex h-[18px] shrink-0 items-center justify-between bg-[#f0f0f0] pl-[4px] pr-[21px] text-[7.5px] text-[#222]">
        <span>Preselected: Unnamed8.Array.Edge13 (-6.451294,-5.321948,10.000000)</span>
        <span>47.35 x 28.62 mm</span>
      </div>
      <svg viewBox="0 0 12 18" className="pointer-events-none absolute left-[161px] top-[100px] h-[14px] w-[10px]">
        <path d="M1 1v13l3.5-3.2L7 16.5l2.2-1-2.5-5.5H11z" fill="#fff" stroke="#222" strokeWidth="1" />
      </svg>
    </div>
  );
}
